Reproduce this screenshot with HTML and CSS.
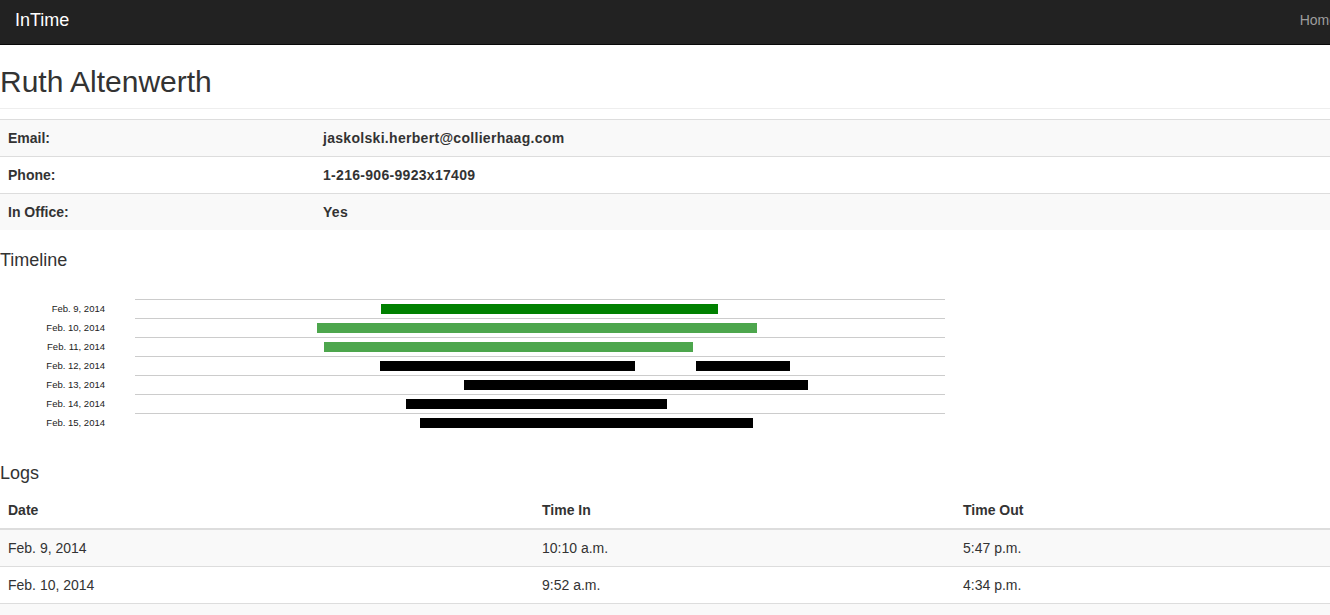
FILE: index.html
```html
<!DOCTYPE html>
<html lang="en">
<head>
    <meta charset="UTF-8">
    <meta name="viewport" content="width=device-width, initial-scale=1.0">
    <title>InTime - Ruth Altenwerth</title>
    <link rel="stylesheet" href="styles.css">
</head>
<body>

    <!-- Top Navigation -->
    <nav class="navbar">
        <a class="brand" href="#">InTime</a>
        <a class="nav-link" href="#">Home</a>
    </nav>

    <div class="page">
        <div class="page-header">
            <h1>Ruth Altenwerth</h1>
        </div>

        <!-- Employee Details -->
        <table class="table table-striped details">
            <tr>
                <th>Email:</th>
                <th class="value">jaskolski.herbert@collierhaag.com</th>
            </tr>
            <tr>
                <th>Phone:</th>
                <th class="value">1-216-906-9923x17409</th>
            </tr>
            <tr>
                <th>In Office:</th>
                <th class="value">Yes</th>
            </tr>
        </table>

        <!-- Timeline Chart -->
        <h4 class="section-title timeline-title">Timeline</h4>
        <div class="timeline">
            <div class="tl-row">
                <span class="tl-label">Feb. 9, 2014</span>
                <div class="tl-track">
                    <span class="bar bar-today" style="left: 246px; width: 337px;"></span>
                </div>
            </div>
            <div class="tl-row">
                <span class="tl-label">Feb. 10, 2014</span>
                <div class="tl-track">
                    <span class="bar bar-week" style="left: 182px; width: 440px;"></span>
                </div>
            </div>
            <div class="tl-row">
                <span class="tl-label">Feb. 11, 2014</span>
                <div class="tl-track">
                    <span class="bar bar-week" style="left: 189px; width: 369px;"></span>
                </div>
            </div>
            <div class="tl-row">
                <span class="tl-label">Feb. 12, 2014</span>
                <div class="tl-track">
                    <span class="bar" style="left: 245px; width: 255px;"></span>
                    <span class="bar" style="left: 561px; width: 94px;"></span>
                </div>
            </div>
            <div class="tl-row">
                <span class="tl-label">Feb. 13, 2014</span>
                <div class="tl-track">
                    <span class="bar" style="left: 329px; width: 344px;"></span>
                </div>
            </div>
            <div class="tl-row">
                <span class="tl-label">Feb. 14, 2014</span>
                <div class="tl-track">
                    <span class="bar" style="left: 271px; width: 261px;"></span>
                </div>
            </div>
            <div class="tl-row">
                <span class="tl-label">Feb. 15, 2014</span>
                <div class="tl-track">
                    <span class="bar" style="left: 285px; width: 333px;"></span>
                </div>
            </div>
        </div>

        <!-- Logs Table -->
        <h4 class="section-title logs-title">Logs</h4>
        <table class="table table-striped logs">
            <thead>
                <tr>
                    <th class="col-date">Date</th>
                    <th class="col-in">Time In</th>
                    <th>Time Out</th>
                </tr>
            </thead>
            <tbody>
                <tr><td>Feb. 9, 2014</td><td>10:10 a.m.</td><td>5:47 p.m.</td></tr>
                <tr><td>Feb. 10, 2014</td><td>9:52 a.m.</td><td>4:34 p.m.</td></tr>
                <tr><td>Feb. 11, 2014</td><td>9:55 a.m.</td><td>3:38 p.m.</td></tr>
                <tr><td>Feb. 12, 2014</td><td>10:10 a.m.</td><td>1:39 p.m.</td></tr>
                <tr><td>Feb. 12, 2014</td><td>2:56 p.m.</td><td>4:51 p.m.</td></tr>
                <tr><td>Feb. 13, 2014</td><td>12:00 p.m.</td><td>5:18 p.m.</td></tr>
                <tr><td>Feb. 14, 2014</td><td>10:43 a.m.</td><td>2:58 p.m.</td></tr>
                <tr><td>Feb. 15, 2014</td><td>11:03 a.m.</td><td>4:21 p.m.</td></tr>
            </tbody>
        </table>
    </div>

</body>
</html>
```

FILE: styles.css
```css
* {
    box-sizing: border-box;
}

body {
    font-family: "Liberation Sans", Arial, sans-serif;
    font-size: 14px;
    line-height: 20px;
    color: #333;
    background-color: #fff;
    margin: 0;
    padding: 0;
}

a {
    text-decoration: none;
}

/* Navbar */
.navbar {
    display: flex;
    align-items: flex-start;
    height: 45px;
    padding-top: 10px;
    background-color: #222;
    border-bottom: 1px solid #080808;
    overflow: hidden;
}

.brand {
    color: #fff;
    font-size: 18px;
    line-height: 20px;
    padding-left: 15px;
}

.nav-link {
    color: #9d9d9d;
    font-size: 14px;
    line-height: 20px;
    margin-left: auto;
    margin-right: -7px;
}

/* Header */
.page-header {
    padding-bottom: 10px;
    margin-bottom: 10px;
    border-bottom: 1px solid #eee;
}

.page-header h1 {
    margin: 20px 0 0;
    font-size: 30px;
    font-weight: normal;
    line-height: 1.1;
}

/* Tables */
.table {
    width: 100%;
    border-collapse: collapse;
    border-spacing: 0;
    margin-bottom: 20px;
}

.table th,
.table td {
    padding: 8px;
    line-height: 20px;
    text-align: left;
    vertical-align: top;
    border-top: 1px solid #ddd;
}

.table th {
    font-weight: bold;
}

.table thead th {
    border-top: 0;
    border-bottom: 2px solid #ddd;
    vertical-align: bottom;
}

.details tr:nth-child(odd),
.logs tbody tr:nth-child(odd) {
    background-color: #f9f9f9;
}

.details th:first-child {
    width: 315px;
}

.details .value {
    letter-spacing: 0.3px;
}

.logs .col-date {
    width: 534px;
}

.logs .col-in {
    width: 421px;
}

/* Section headings */
.section-title {
    margin: 20px 0 10px;
    font-size: 18px;
    font-weight: normal;
    line-height: 1.1;
}

.timeline-title {
    margin-top: 21px;
}

.logs-title {
    margin-bottom: 8px;
}

/* Timeline chart */
.timeline {
    padding: 18px 0 12px;
}

.tl-row {
    display: flex;
    height: 19px;
}

.tl-label {
    width: 105px;
    margin-right: 30px;
    text-align: right;
    font-size: 9.5px;
    line-height: 19px;
    color: #222;
}

.tl-track {
    position: relative;
    width: 810px;
    height: 19px;
    border-top: 1px solid #ccc;
}

.bar {
    position: absolute;
    top: 4px;
    height: 10px;
    background-color: #000;
}

.bar-today {
    background-color: #008000;
}

.bar-week {
    background-color: #4da64d;
}
```
